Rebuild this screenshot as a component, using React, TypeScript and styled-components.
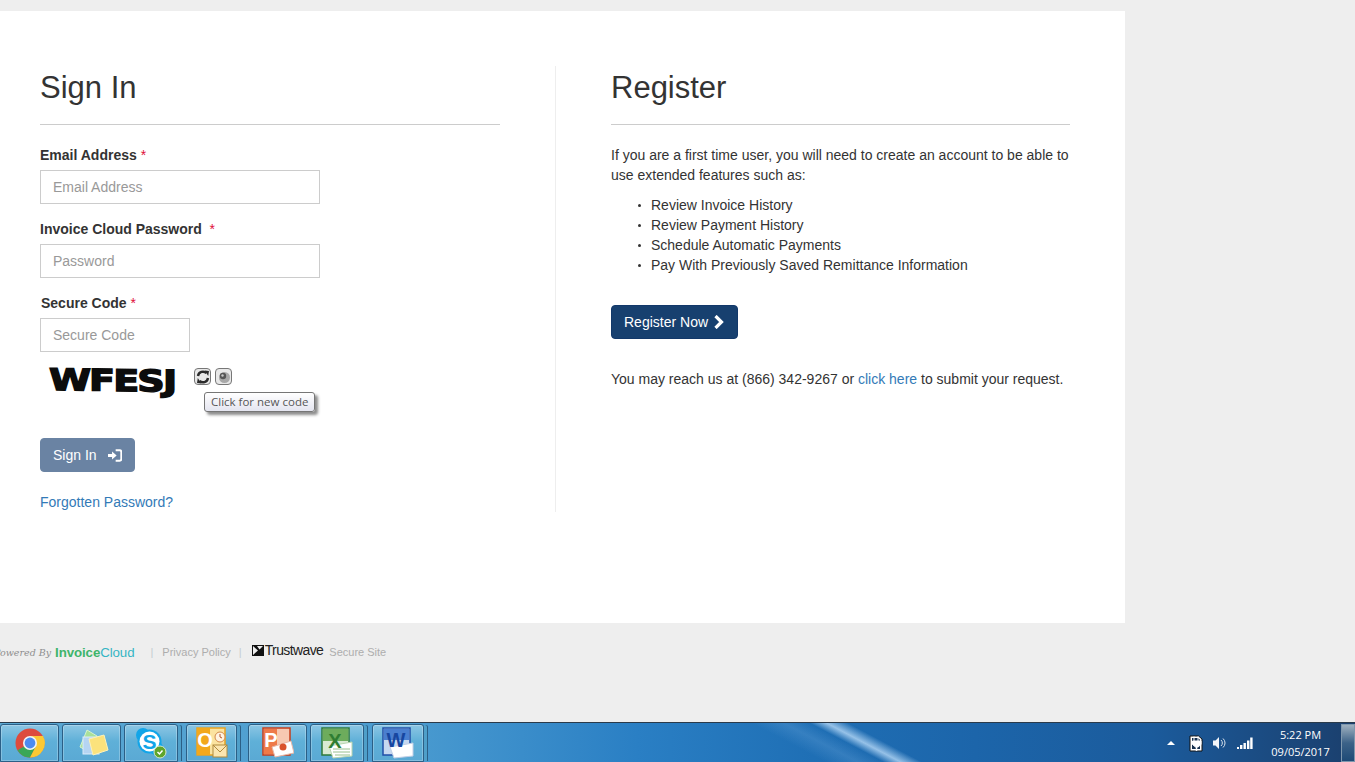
import React from "react";
import styled, { createGlobalStyle } from "styled-components";

const GlobalStyle = createGlobalStyle`
  html, body {
    margin: 0;
    padding: 0;
    height: 100%;
    overflow: hidden;
    background: #eeeeee;
    font-family: "Liberation Sans", Arial, sans-serif;
    color: #333333;
  }
  * {
    box-sizing: border-box;
  }
`;

const features = [
  "Review Invoice History",
  "Review Payment History",
  "Schedule Automatic Payments",
  "Pay With Previously Saved Remittance Information",
];

const ChromeIcon = () => (
  <svg width="30" height="30" viewBox="0 0 30 30">
    <circle cx="15" cy="15" r="14.5" fill="#dd4b3e" />
    <path d="M15 15 L2.5 22.2 A14.5 14.5 0 0 0 15 29.5 L22 17z" fill="#3aa757" />
    <path d="M15 8 H28 A14.5 14.5 0 0 1 15 29.5 L21 18z" fill="#fcc934" />
    <circle cx="15" cy="15" r="7" fill="#f4f4f4" />
    <circle cx="15" cy="15" r="5.4" fill="#4d8bf0" />
  </svg>
);

const NotesIcon = () => (
  <svg width="34" height="30" viewBox="0 0 34 30">
    <path d="M5 19 L12 2 L22 8 L14 24z" fill="#a9e09a" stroke="#d6f2cc" />
    <rect x="8" y="9" width="16" height="17" fill="#b5d4f2" stroke="#dcecfa" />
    <path d="M14 11 L29 7 L33 22 L18 27z" fill="#fbe27c" stroke="#fdf1b8" />
  </svg>
);

const SkypeIcon = () => (
  <svg width="32" height="32" viewBox="0 0 32 32">
    <circle cx="8" cy="8" r="7" fill="#12a5e8" />
    <circle cx="21" cy="21" r="7" fill="#12a5e8" />
    <circle cx="14.5" cy="14.5" r="12" fill="#12a5e8" />
    <circle cx="14.5" cy="14.5" r="10" fill="#ffffff" />
    <text x="14.5" y="22" fontSize="21" fontWeight="700" fontFamily="Liberation Sans" fill="#12a5e8" textAnchor="middle">S</text>
    <circle cx="25" cy="25" r="6" fill="#5fa52b" stroke="#d8e8c8" />
    <path d="M22.5 25 L24.5 27 L27.5 23.5" fill="none" stroke="#ffffff" strokeWidth="1.5" />
  </svg>
);

const OutlookIcon = () => (
  <svg width="32" height="32" viewBox="0 0 32 32">
    <rect x="1" y="1" width="28" height="27" fill="#fbe3a0" stroke="#e8a322" strokeWidth="1.5" />
    <path d="M1 1 H14 V28 H1z" fill="#f2a81c" />
    <text x="9" y="20" fontSize="20" fontWeight="700" fontFamily="Liberation Sans" fill="#ffffff" textAnchor="middle">O</text>
    <circle cx="24" cy="10" r="5" fill="#fff3e0" stroke="#d28b4a" />
    <path d="M24 7 V10 L26 11" fill="none" stroke="#b5562a" />
    <rect x="17" y="18" width="14" height="12" fill="#fbe6b0" stroke="#b08a3c" />
    <path d="M17 18 L24 25 L31 18" fill="none" stroke="#b08a3c" />
  </svg>
);

const PowerPointIcon = () => (
  <svg width="32" height="32" viewBox="0 0 32 32">
    <rect x="1" y="1" width="27" height="27" fill="#f7c9b2" stroke="#c43e1c" strokeWidth="1.5" />
    <path d="M2 2 H15 V27 H2z" fill="#ee7a4a" />
    <text x="9" y="20" fontSize="20" fontWeight="700" fontFamily="Liberation Sans" fill="#ffffff" textAnchor="middle">P</text>
    <path d="M10 20 L29 14 L32 26 L13 30z" fill="#ffffff" stroke="#e6b8a8" />
    <circle cx="21" cy="20" r="3.5" fill="#d9532c" />
  </svg>
);

const ExcelIcon = () => (
  <svg width="32" height="32" viewBox="0 0 32 32">
    <rect x="1" y="1" width="27" height="27" fill="#d9ead3" stroke="#2d7a3a" strokeWidth="1.5" />
    <path d="M2 2 H27 V14 H2z" fill="#6dac5c" />
    <path d="M8 19 L31 15 L31 29 L12 31z" fill="#ffffff" stroke="#b8d6b0" />
    <path d="M12 22 H29 M12 25 H29 M14 28 H29" stroke="#98c08e" />
    <text x="14" y="21" fontSize="20" fontWeight="700" fontFamily="Liberation Sans" fill="#2f7d32" textAnchor="middle">X</text>
  </svg>
);

const WordIcon = () => (
  <svg width="32" height="32" viewBox="0 0 32 32">
    <rect x="1" y="1" width="27" height="27" fill="#c6d8f0" stroke="#1f4fa8" strokeWidth="1.5" />
    <path d="M2 2 H27 V13 H2z" fill="#4a7fd0" />
    <path d="M8 20 L31 16 L31 29 L12 31z" fill="#ffffff" stroke="#c0cfe6" />
    <text x="14" y="20" fontSize="20" fontWeight="700" fontFamily="Liberation Sans" fill="#1746a0" textAnchor="middle">W</text>
  </svg>
);

const SignInGlyph = () => (
  <svg width="17" height="15" viewBox="0 0 16 14">
    <path d="M0 5.4 H4.5 V2.6 L9.6 7 L4.5 11.4 V8.6 H0z" fill="#ffffff" />
    <path d="M8.5 1.2 H13 A1.8 1.8 0 0 1 14.8 3 V11 A1.8 1.8 0 0 1 13 12.8 H8.5" fill="none" stroke="#ffffff" strokeWidth="2.2" />
  </svg>
);

const ChevronGlyph = () => (
  <svg width="11" height="14" viewBox="0 0 11 14">
    <path d="M2.5 1 L8.5 7 L2.5 13" fill="none" stroke="#ffffff" strokeWidth="3.2" />
  </svg>
);

const RefreshGlyph = () => (
  <svg width="14" height="14" viewBox="0 0 14 14">
    <path d="M2 6 A5 5 0 0 1 10.5 3.2" fill="none" stroke="#2a2a2a" strokeWidth="2.4" />
    <path d="M8.6 0.6 L13 1 L12.2 6z" fill="#2a2a2a" />
    <path d="M12 8 A5 5 0 0 1 3.5 10.8" fill="none" stroke="#2a2a2a" strokeWidth="2.4" />
    <path d="M5.4 13.4 L1 13 L1.8 8z" fill="#2a2a2a" />
  </svg>
);

const SpeakerGlyph = () => (
  <svg width="14" height="14" viewBox="0 0 14 14">
    <circle cx="7.5" cy="7.5" r="5.5" fill="#a8a8a8" />
    <circle cx="6" cy="6" r="3.2" fill="#555555" />
    <circle cx="5.5" cy="5.5" r="1.2" fill="#c8c8c8" />
  </svg>
);

const PowerGlyph = () => (
  <svg width="14" height="17" viewBox="0 0 14 17">
    <path d="M1 1 H9.5 L13 4 V16 H1z" fill="#ffffff" stroke="#111111" strokeWidth="1" />
    <path d="M3 3 H9 L11 4.8 V14 H3z" fill="#16304f" />
    <path d="M5 1.5 V6 M9 1.5 V6 M3.5 6 H12 V9.5 L9 12 H6.5 L3.5 9.5z" fill="#ffffff" stroke="#ffffff" />
    <path d="M7.5 12 V16" stroke="#ffffff" strokeWidth="1.5" />
  </svg>
);

const VolumeGlyph = () => (
  <svg width="14" height="14" viewBox="0 0 14 14">
    <path d="M1 4.5 H3.5 L7 1 V13 L3.5 9.5 H1z" fill="#f2f5f8" />
    <path d="M9 4 A4 4 0 0 1 9 10 M11 2.5 A6 6 0 0 1 11 11.5" fill="none" stroke="#d8e2ec" strokeWidth="1" />
  </svg>
);

const SignalGlyph = () => (
  <svg width="16" height="12" viewBox="0 0 16 12">
    <rect x="0" y="10" width="2" height="2" fill="#fff" />
    <rect x="3" y="8" width="2.4" height="4" fill="#fff" />
    <rect x="6.5" y="6" width="2.4" height="6" fill="#fff" />
    <rect x="10" y="3.5" width="2.4" height="8.5" fill="#fff" />
    <rect x="13.2" y="0.5" width="2.4" height="11.5" fill="#fff" />
  </svg>
);

const TrustwaveMark = () => (
  <svg width="12" height="11" viewBox="0 0 12 11">
    <rect width="12" height="11" fill="#111" />
    <path d="M1 1 L6 5.5 L1 10z M11 1 L7.5 4.5 L5 1z" fill="#eeeeee" />
  </svg>
);

const App: React.FC = () => {
  return (
    <Page>
      <GlobalStyle />
      <Card>
        <SignInColumn>
          <Title>Sign In</Title>
          <Field>
            <Label>
              Email Address <Required>*</Required>
            </Label>
            <Input placeholder="Email Address" />
          </Field>
          <Field>
            <Label>
              Invoice Cloud Password &nbsp;<Required>*</Required>
            </Label>
            <Input placeholder="Password" />
          </Field>
          <Field>
            <CodeLabel>
              Secure Code <Required>*</Required>
            </CodeLabel>
            <Input $short placeholder="Secure Code" />
          </Field>
          <CaptchaRow>
            <CaptchaBox>
              <CaptchaText>WFESJ</CaptchaText>
            </CaptchaBox>
            <CaptchaButton>
              <RefreshGlyph />
            </CaptchaButton>
            <CaptchaButton>
              <SpeakerGlyph />
            </CaptchaButton>
            <Tooltip>Click for new code</Tooltip>
          </CaptchaRow>
          <SignInButton>
            Sign In
            <SignInGlyph />
          </SignInButton>
          <ForgotLink>Forgotten Password?</ForgotLink>
        </SignInColumn>
        <RegisterColumn>
          <Title>Register</Title>
          <Paragraph>
            If you are a first time user, you will need to create an account to be able to use
            extended features such as:
          </Paragraph>
          <FeatureList>
            {features.map((feature) => (
              <li key={feature}>{feature}</li>
            ))}
          </FeatureList>
          <RegisterButton>
            Register Now
            <ChevronGlyph />
          </RegisterButton>
          <ContactLine>
            You may reach us at (866) 342-9267 or <InlineLink>click here</InlineLink> to submit your
            request.
          </ContactLine>
        </RegisterColumn>
      </Card>
      <Footer>
        <PoweredBy>Powered By</PoweredBy>
        <Brand>
          <BrandGreen>Invoice</BrandGreen>
          <BrandTeal>Cloud</BrandTeal>
        </Brand>
        <Pipe>|</Pipe>
        <FooterText>Privacy Policy</FooterText>
        <Pipe $tight>|</Pipe>
        <Trustwave>
          <TrustwaveMark />
          <TrustwaveName>Trustwave</TrustwaveName>
        </Trustwave>
        <FooterText>Secure Site</FooterText>
      </Footer>
      <Taskbar>
        <TaskButton $width={59}>
          <ChromeIcon />
        </TaskButton>
        <TaskButton $width={59}>
          <NotesIcon />
        </TaskButton>
        <TaskButton $width={54} $stack={5}>
          <SkypeIcon />
        </TaskButton>
        <TaskButton $width={51} $stack={8}>
          <OutlookIcon />
        </TaskButton>
        <TaskButton $width={59}>
          <PowerPointIcon />
        </TaskButton>
        <TaskButton $width={54} $stack={5}>
          <ExcelIcon />
        </TaskButton>
        <TaskButton $width={52} $stack={5}>
          <WordIcon />
        </TaskButton>
        <Tray>
          <TrayArrow />
          <PowerGlyph />
          <VolumeGlyph />
          <SignalGlyph />
          <Clock>
            <span>5:22 PM</span>
            <span>09/05/2017</span>
          </Clock>
          <ShowDesktop />
        </Tray>
      </Taskbar>
    </Page>
  );
};

const Page = styled.div`
  display: flex;
  flex-direction: column;
  height: 762px;
  padding-top: 11px;
  overflow: hidden;
`;

const Card = styled.main`
  display: flex;
  width: 1125px;
  height: 612px;
  padding: 55px 0 0 40px;
  background: #ffffff;
  flex-shrink: 0;
`;

const SignInColumn = styled.section`
  width: 516px;
  height: 446px;
  padding-right: 55px;
  border-right: 1px solid #eeeeee;
  flex-shrink: 0;
`;

const RegisterColumn = styled.section`
  width: 514px;
  padding-left: 55px;
`;

const Title = styled.h1`
  margin: 0 0 20px;
  height: 59px;
  padding-top: 2px;
  border-bottom: 1px solid #cccccc;
  font-size: 31px;
  font-weight: 400;
  line-height: 40px;
  color: #333333;
`;

const Field = styled.div`
  margin-bottom: 15px;
`;

const Label = styled.label`
  display: block;
  margin-bottom: 5px;
  font-size: 14px;
  font-weight: 700;
  line-height: 20px;
  color: #333333;
`;

const CodeLabel = styled(Label)`
  padding-left: 1px;
`;

const Required = styled.span`
  font-weight: 400;
  color: #e0103a;
`;

const Input = styled.input<{ $short?: boolean }>`
  display: block;
  width: ${(p) => (p.$short ? "150px" : "280px")};
  height: 34px;
  padding: 6px 12px;
  border: 1px solid #cccccc;
  border-radius: 0;
  background: #ffffff;
  font-family: inherit;
  font-size: 14px;
  color: #555555;
  outline: none;

  &::placeholder {
    color: #999999;
    opacity: 1;
  }
`;

const CaptchaRow = styled.div`
  position: relative;
  display: flex;
  align-items: flex-start;
  gap: 4px;
  height: 73px;
  margin-top: -2px;
  padding-left: 9px;
`;

const CaptchaBox = styled.div`
  width: 141px;
  height: 38px;
  margin-top: -3px;
`;

const CaptchaText = styled.div`
  font-family: "DejaVu Sans", sans-serif;
  font-size: 30px;
  font-weight: 700;
  line-height: 36px;
  letter-spacing: -1.5px;
  color: #0c0c0c;
  -webkit-text-stroke: 1.4px #0c0c0c;
  white-space: nowrap;
  transform: scaleX(1.27) skewY(1deg);
  transform-origin: left center;
`;

const CaptchaButton = styled.button`
  display: flex;
  align-items: center;
  justify-content: center;
  width: 17px;
  height: 17px;
  margin-top: 3px;
  padding: 0;
  border: 1px solid #777777;
  border-radius: 4px;
  background: #e8e8e8;
`;

const Tooltip = styled.div`
  position: absolute;
  left: 164px;
  top: 27px;
  height: 20px;
  padding: 0 6px;
  border: 1px solid #767676;
  border-radius: 3px;
  background: linear-gradient(#ffffff, #e4e5f0);
  box-shadow: 3px 3px 3px rgba(0, 0, 0, 0.45);
  font-family: "Open Sans", sans-serif;
  font-size: 11.5px;
  line-height: 18px;
  color: #575757;
  white-space: nowrap;
`;

const BaseButton = styled.button`
  display: flex;
  align-items: center;
  height: 34px;
  padding: 0 12px;
  border-radius: 4px;
  font-family: inherit;
  font-size: 14px;
  white-space: nowrap;
  color: #ffffff;
`;

const SignInButton = styled(BaseButton)`
  gap: 11px;
  width: 95px;
  border: 1px solid #6a83a3;
  background: #6a83a3;
`;

const RegisterButton = styled(BaseButton)`
  gap: 5px;
  width: 127px;
  margin-top: 30px;
  border: 1px solid #12386a;
  background: #17406f;
`;

const ForgotLink = styled.a`
  display: block;
  margin-top: 20px;
  font-size: 14px;
  line-height: 20px;
  color: #337ab7;
`;

const Paragraph = styled.p`
  margin: 0;
  font-size: 14px;
  line-height: 20px;
  color: #333333;
`;

const FeatureList = styled.ul`
  margin: 10px 0 0;
  padding: 0 0 0 40px;
  list-style: none;
  font-size: 14px;
  line-height: 20px;
  color: #333333;

  li {
    position: relative;
  }

  li::before {
    content: "";
    position: absolute;
    left: -13px;
    top: 9px;
    width: 3px;
    height: 3px;
    border-radius: 50%;
    background: #333333;
  }
`;

const ContactLine = styled(Paragraph)`
  margin-top: 30px;
`;

const InlineLink = styled.a`
  color: #337ab7;
`;

const Footer = styled.footer`
  display: flex;
  align-items: center;
  height: 58px;
  margin-bottom: 41px;
  font-size: 11px;
  color: #aaaaaa;
  flex-shrink: 0;
`;

const PoweredBy = styled.span`
  margin-left: -6px;
  margin-right: 4px;
  font-family: "DejaVu Serif", serif;
  font-style: italic;
  font-size: 9.5px;
  color: #8f8f8f;
  white-space: nowrap;
`;

const Brand = styled.span`
  font-size: 13.3px;
  letter-spacing: -0.1px;
`;

const BrandGreen = styled.span`
  font-weight: 700;
  color: #3fb56b;
`;

const BrandTeal = styled.span`
  color: #35b5c4;
`;

const Pipe = styled.span<{ $tight?: boolean }>`
  margin: ${(p) => (p.$tight ? "0 10px 0 8px" : "0 9px 0 16px")};
  color: #c4ccd0;
`;

const FooterText = styled.span`
  color: #adadad;
`;

const Trustwave = styled.span`
  display: flex;
  align-items: center;
  gap: 1px;
  margin-right: 6px;
  margin-top: -4px;
`;

const TrustwaveName = styled.span`
  font-size: 14px;
  letter-spacing: -0.6px;
  color: #222222;
`;

// the streak and tint stops are worked out for the 27.8deg gradient across the whole bar
const Taskbar = styled.nav`
  display: flex;
  align-items: stretch;
  gap: 3px;
  height: 40px;
  padding-top: 1px;
  border-top: 1px solid #2a3a4a;
  background:
    linear-gradient(27.8deg, transparent 412px, rgba(190, 222, 250, 0.75) 420px, transparent 430px),
    linear-gradient(27.8deg, transparent 385px, rgba(120, 175, 225, 0.25) 400px, transparent 412px),
    linear-gradient(90deg, #5ba8d2 0%, #4a9bd0 30%, #2a7fc4 47%, #1f6fb5 60%, #1c65aa 72%, #1b5b9c 85%, #1b3f6d 100%);
  flex-shrink: 0;
`;

const TaskButton = styled.div<{ $width: number; $stack?: number }>`
  display: flex;
  align-items: center;
  justify-content: center;
  width: ${(p) => p.$width}px;
  margin-right: ${(p) => p.$stack ?? 0}px;
  border: 1px solid #2b5f86;
  border-radius: 3px 3px 0 0;
  background: linear-gradient(#8cc6e4, #5fb0d8 45%, #5aa9d4);
  box-shadow:
    inset 0 0 0 1px rgba(255, 255, 255, 0.25),
    ${(p) => (p.$stack ? "4px 0 0 -1px #4f9fc9, 5px 0 0 -1px #2b5f86" : "0 0 0 transparent")};
`;

const Tray = styled.div`
  display: flex;
  align-items: center;
  margin-left: auto;
  height: 100%;
  color: #ffffff;

  & > svg:nth-of-type(1) {
    margin-left: 14px;
  }

  & > svg:nth-of-type(2) {
    margin-left: 9px;
  }

  & > svg:nth-of-type(3) {
    margin-left: 11px;
  }
`;

const TrayArrow = styled.span`
  width: 0;
  height: 0;
  border-left: 4px solid transparent;
  border-right: 4px solid transparent;
  border-bottom: 4px solid #ffffff;
`;

const Clock = styled.div`
  display: flex;
  flex-direction: column;
  align-items: center;
  width: 73px;
  margin-left: 11px;
  font-family: "Open Sans", sans-serif;
  font-size: 11px;
  line-height: 17px;
  color: #ffffff;
`;

const ShowDesktop = styled.div`
  width: 14px;
  height: 38px;
  margin-left: 4px;
  border: 1px solid #7e97ad;
  background: linear-gradient(#9fb0bf, #3c6288 50%, #1e4a76);
`;

export default App;
